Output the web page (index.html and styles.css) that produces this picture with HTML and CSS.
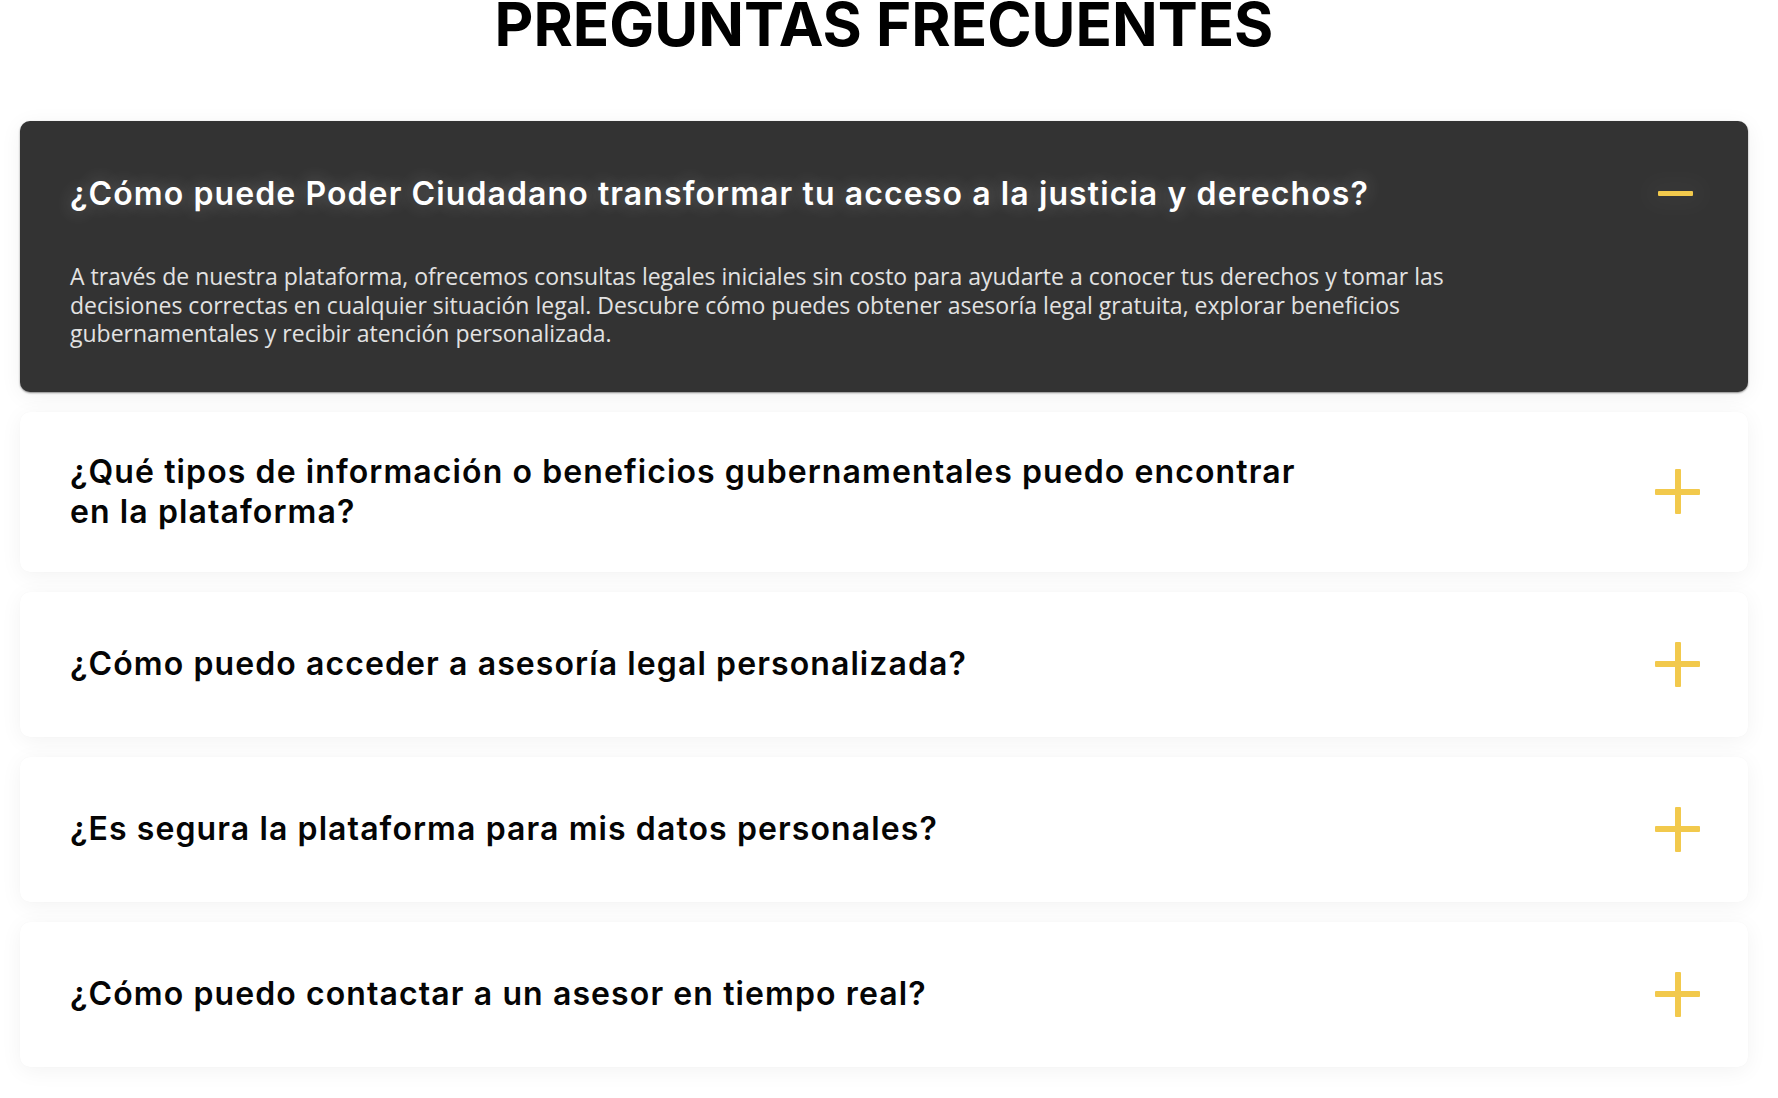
FILE: index.html
```html
<!DOCTYPE html>
<html lang="es">
<head>
<meta charset="utf-8">
<title>Preguntas frecuentes</title>
<link rel="stylesheet" href="styles.css">
</head>
<body>
<main class="faq">
  <h2 class="faq-title">PREGUNTAS FRECUENTES</h2>
  <div class="faq-list">
    <div class="faq-item is-open">
      <div class="faq-q">
        <h3 class="faq-q-text">¿Cómo puede Poder Ciudadano transformar tu acceso a la justicia y derechos?</h3>
        <span class="faq-icon"><span class="bar bar-h"></span></span>
      </div>
      <div class="faq-a">
        <p>A través de nuestra plataforma, ofrecemos consultas legales iniciales sin costo para ayudarte a conocer tus derechos y tomar las decisiones correctas en cualquier situación legal. Descubre cómo puedes obtener asesoría legal gratuita, explorar beneficios gubernamentales y recibir atención personalizada.</p>
      </div>
    </div>
    <div class="faq-item">
      <div class="faq-q">
        <h3 class="faq-q-text">¿Qué tipos de información o beneficios gubernamentales puedo encontrar<br>en la plataforma?</h3>
        <span class="faq-icon"><span class="bar bar-h"></span><span class="bar bar-v"></span></span>
      </div>
    </div>
    <div class="faq-item">
      <div class="faq-q">
        <h3 class="faq-q-text">¿Cómo puedo acceder a asesoría legal personalizada?</h3>
        <span class="faq-icon"><span class="bar bar-h"></span><span class="bar bar-v"></span></span>
      </div>
    </div>
    <div class="faq-item">
      <div class="faq-q">
        <h3 class="faq-q-text">¿Es segura la plataforma para mis datos personales?</h3>
        <span class="faq-icon"><span class="bar bar-h"></span><span class="bar bar-v"></span></span>
      </div>
    </div>
    <div class="faq-item">
      <div class="faq-q">
        <h3 class="faq-q-text">¿Cómo puedo contactar a un asesor en tiempo real?</h3>
        <span class="faq-icon"><span class="bar bar-h"></span><span class="bar bar-v"></span></span>
      </div>
    </div>
  </div>
</main>
</body>
</html>
```

FILE: styles.css
```css
* { box-sizing: border-box; }

html, body {
  margin: 0;
  padding: 0;
  background: #ffffff;
}

body {
  font-family: "Inter", "Noto Sans", sans-serif;
  color: #000;
}

.faq {
  padding: 0 30px 40px 20px;
}

.faq-title {
  margin: -6px 0 67px;
  font-family: "Inter", "Noto Sans", sans-serif;
  font-weight: 700;
  font-size: 60px;
  line-height: 60px;
  text-align: center;
  color: #000;
}

.faq-list {
  display: flex;
  flex-direction: column;
  gap: 20px;
}

.faq-item {
  background: #ffffff;
  border-radius: 10px;
  box-shadow: 0 0 1px rgba(0, 0, 0, 0.04), 0 4px 22px rgba(0, 0, 0, 0.05);
}

.faq-item.is-open {
  background: #333333;
  box-shadow: 0 1px 2px rgba(0, 0, 0, 0.45), 0 4px 22px rgba(0, 0, 0, 0.06);
}

.faq-q {
  display: flex;
  align-items: center;
  justify-content: space-between;
  padding: 40px 48px 40px 50px;
  min-height: 145px;
}

.faq-q-text {
  margin: 0;
  font-family: "Inter", "Noto Sans", sans-serif;
  font-weight: 600;
  font-size: 32px;
  line-height: 40px;
  color: #050505;
  letter-spacing: 1.1px;
}

.is-open .faq-q-text {
  color: #ffffff;
  text-shadow: 0 0 18px rgba(255, 255, 255, 0.28);
}

.faq-icon {
  position: relative;
  flex: 0 0 45px;
  width: 45px;
  height: 65px;
}

.bar {
  position: absolute;
  background: #f2c94c;
  border-radius: 1px;
}

.bar-h {
  width: 45px;
  height: 6px;
  top: 29.5px;
  left: 0;
}

.bar-v {
  width: 6px;
  height: 45px;
  top: 10px;
  left: 19.5px;
}

.is-open .bar-h {
  width: 35px;
  height: 5px;
  left: 3px;
  top: 30px;
  box-shadow: 0 0 24px 14px rgba(255, 255, 255, 0.025);
}

.faq-a {
  margin-top: -4px;
  padding: 0 50px 44px 50px;
}

.faq-a p {
  margin: 0;
  max-width: 1420px;
  font-family: "Open Sans", "Noto Sans", sans-serif;
  font-weight: 400;
  font-size: 23px;
  line-height: 28.5px;
  color: #e2e2e2;
}
```
